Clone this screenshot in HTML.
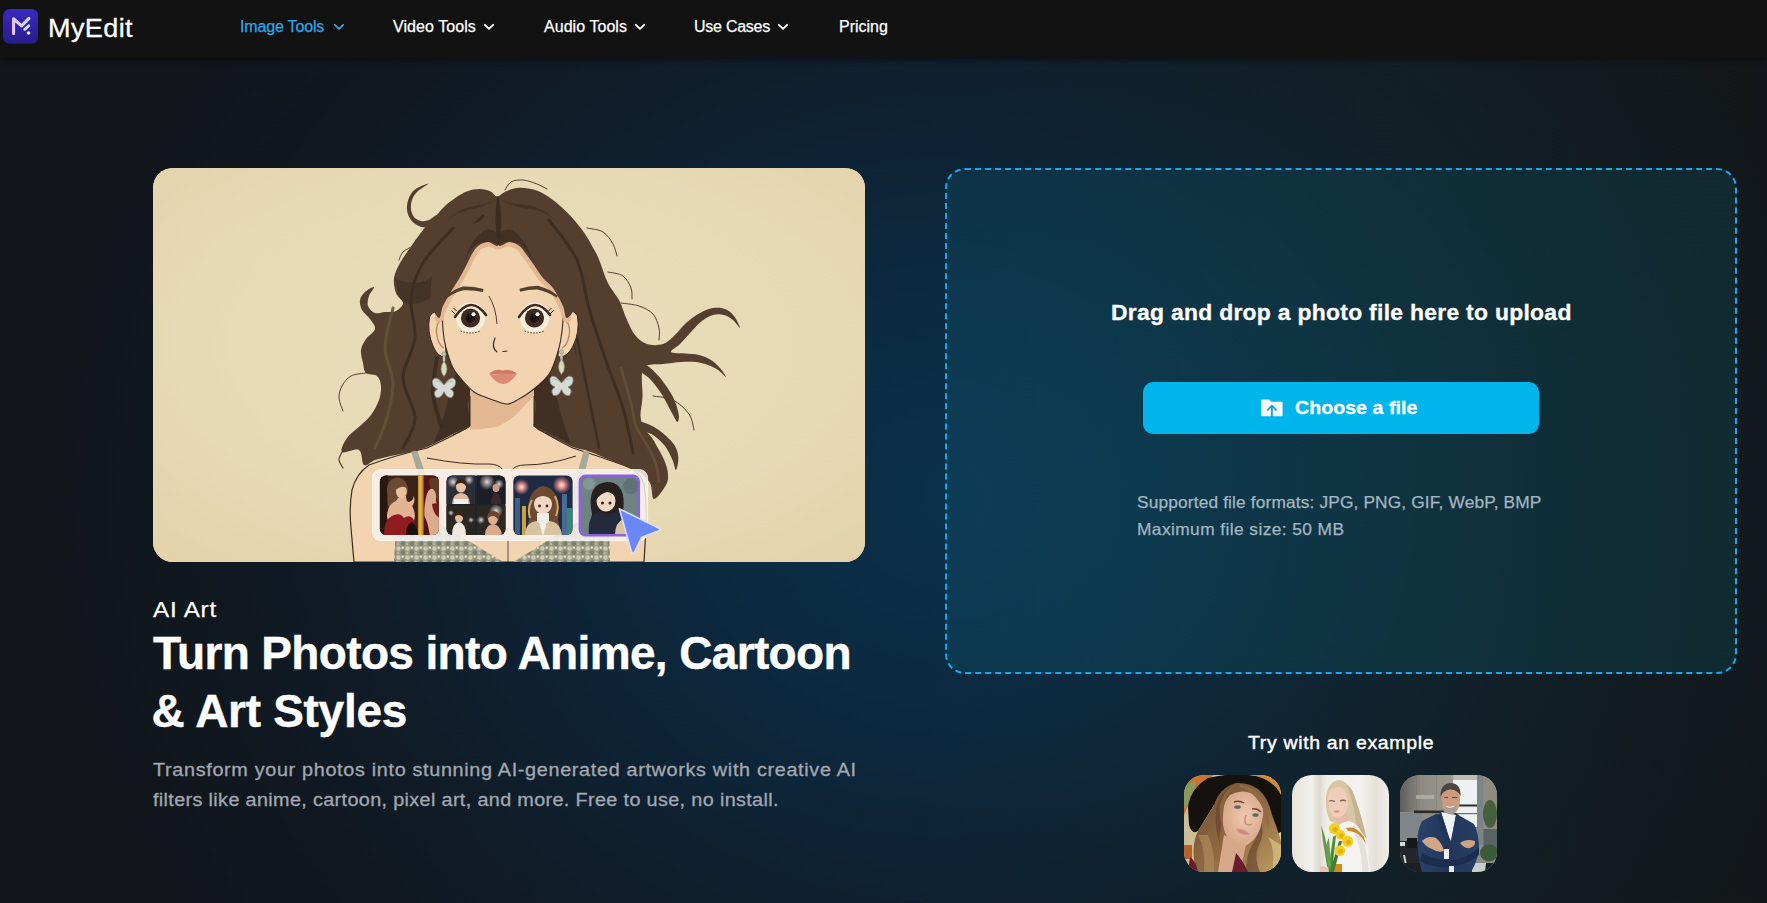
<!DOCTYPE html>
<html lang="en">
<head>
<meta charset="utf-8">
<title>MyEdit - AI Art</title>
<style>
*{box-sizing:border-box;margin:0;padding:0}
html,body{width:1767px;height:903px;overflow:hidden;background:#121212}
body{font-family:"Liberation Sans",sans-serif;color:#fff;position:relative}
.bg{position:absolute;left:0;top:58px;width:1767px;height:845px;
  background:linear-gradient(90deg,rgba(30,70,40,0) 52%,rgba(30,70,40,.10) 80%,rgba(40,60,40,.06) 100%),
  radial-gradient(ellipse 900px 800px at 945px 440px,#0c304a 0%,#0c2b43 22%,#0e2335 45%,#101c28 65%,#10181f 85%,#12151a 100%)}
.hdr{position:absolute;left:0;top:0;width:1767px;height:58px;background:#121212;box-shadow:0 2px 6px rgba(0,0,0,.45)}
.abs{position:absolute;display:block;white-space:nowrap;line-height:1}
.nav{text-decoration:none;display:block;position:absolute;top:18px;font-size:16px;line-height:18px;white-space:nowrap;color:#fff;-webkit-text-stroke:.25px currentColor}

.chev{position:absolute;top:23px;width:12px;height:8px}
.hero{position:absolute;left:153px;top:168px;width:712px;height:394px;border-radius:20px;overflow:hidden;background:#e7d9b6}
.drop{position:absolute;left:945px;top:168px;width:792px;height:506px;border-radius:20px;border:2px dashed #1aa7ee;background:rgba(16,110,130,.2)}
.btn{border:0;padding:0;display:block;position:absolute;left:1143px;top:382px;width:396px;height:52px;border-radius:10px;background:#00b4ec}
.ex{position:absolute;top:775px;width:97px;height:97px;border-radius:20px;overflow:hidden}
</style>
</head>
<body>
<div class="bg"></div>
<header class="hdr"></header>

<!-- logo -->
<svg class="abs" style="left:3.2px;top:9.2px" width="35.2" height="34.8" viewBox="0 0 35 35" preserveAspectRatio="none">
  <defs><linearGradient id="lg" x1="0" y1="0" x2="0" y2="1"><stop offset="0" stop-color="#3a28c2"/><stop offset="1" stop-color="#2a1c8c"/></linearGradient>
  <linearGradient id="lm" x1="0" y1="0" x2="1" y2="0"><stop offset="0" stop-color="#e2c6ff"/><stop offset="1" stop-color="#c9e2ff"/></linearGradient></defs>
  <rect width="35" height="35" rx="7" fill="url(#lg)"/>
  <path d="M10.5 24.6 V9.8 L18.4 17 L25.8 9.5" fill="none" stroke="url(#lm)" stroke-width="3.1" stroke-linecap="round" stroke-linejoin="round"/>
  <path d="M21.6 20.5 L25.7 16.9" fill="none" stroke="#dcdcff" stroke-width="2.8" stroke-linecap="round"/>
  <circle cx="25.4" cy="24.2" r="1.8" fill="#f0ecff"/>
</svg>
<div class="abs" id="brand" style="-webkit-text-stroke:.3px #fff;left:47.5px;top:15px;font-size:26px;letter-spacing:.37px;transform-origin:0 50%;transform:scaleX(1.04)">MyEdit</div>

<!-- nav -->
<a class="nav" id="n1" style="left:240px;color:#2ea7e6;letter-spacing:-.17px">Image Tools</a>
<svg class="chev" style="left:333px" viewBox="0 0 12 8"><path d="M1.9 1.8 L6 5.9 L10.1 1.8" fill="none" stroke="#2ea7e6" stroke-width="1.8" stroke-linecap="round" stroke-linejoin="round"/></svg>
<a class="nav" id="n2" style="left:393px;letter-spacing:.07px">Video Tools</a>
<svg class="chev" style="left:483px" viewBox="0 0 12 8"><path d="M1.9 1.8 L6 5.9 L10.1 1.8" fill="none" stroke="#fff" stroke-width="1.8" stroke-linecap="round" stroke-linejoin="round"/></svg>
<a class="nav" id="n3" style="left:544px;letter-spacing:.05px">Audio Tools</a>
<svg class="chev" style="left:634px" viewBox="0 0 12 8"><path d="M1.9 1.8 L6 5.9 L10.1 1.8" fill="none" stroke="#fff" stroke-width="1.8" stroke-linecap="round" stroke-linejoin="round"/></svg>
<a class="nav" id="n4" style="left:694px;letter-spacing:-.25px">Use Cases</a>
<svg class="chev" style="left:777px" viewBox="0 0 12 8"><path d="M1.9 1.8 L6 5.9 L10.1 1.8" fill="none" stroke="#fff" stroke-width="1.8" stroke-linecap="round" stroke-linejoin="round"/></svg>
<a class="nav" id="n5" style="left:839px">Pricing</a>

<!-- hero illustration -->
<div class="hero">
<svg id="art" width="712" height="394" viewBox="0 0 712 394">
<defs>
<radialGradient id="bgv" cx="50%" cy="45%" r="75%"><stop offset="0" stop-color="#eadcbb"/><stop offset=".6" stop-color="#e8d9b6"/><stop offset="1" stop-color="#e3d2a9"/></radialGradient>
<pattern id="seq" width="9" height="9" patternUnits="userSpaceOnUse"><rect width="9" height="9" fill="#989a85"/><circle cx="2.5" cy="2.5" r="2.2" fill="#cfcab0"/><circle cx="7" cy="6.5" r="2.2" fill="#7c7f6b"/><circle cx="6.8" cy="1.6" r="1.2" fill="#e6e2cc"/><circle cx="2" cy="7" r="1.3" fill="#b9b59a"/></pattern>
<clipPath id="c1"><rect x="226.9" y="307.6" width="59" height="59.4" rx="6"/></clipPath>
<clipPath id="c2"><rect x="293.5" y="307.6" width="59" height="59.4" rx="6"/></clipPath>
<clipPath id="c3"><rect x="360.3" y="307.6" width="59.3" height="59.4" rx="6"/></clipPath>
<clipPath id="c4"><rect x="428" y="309" width="56.7" height="57" rx="5"/></clipPath>
<radialGradient id="spk"><stop offset="0" stop-color="#fff" stop-opacity=".85"/><stop offset=".5" stop-color="#e8dcdc" stop-opacity=".45"/><stop offset="1" stop-color="#e8dcdc" stop-opacity="0"/></radialGradient>
<radialGradient id="fw"><stop offset="0" stop-color="#ffe9d8"/><stop offset=".35" stop-color="#f09a94" stop-opacity=".95"/><stop offset="1" stop-color="#e07a80" stop-opacity="0"/></radialGradient>
</defs>
<rect width="712" height="394" fill="url(#bgv)"/>
<path d="M317 236 L317 258 Q300 268 274 280 Q240 288 216 297 Q203 306 199 322 Q196 340 198 360 L201 394 L491 394 L493 360 Q494 336 491 316 Q486 302 470 297 Q445 288 420 280 Q396 268 381 258 L381 236Z" fill="#f3d4b1" stroke="#3a2a20" stroke-width="1.2"/>
<path d="M258 283 L264.5 283 L284 340 L276 342Z" fill="#a7a998"/>
<path d="M430.5 283 L437 283 L423 342 L415 340Z" fill="#a7a998"/>
<path d="M241 394 L243 360 Q250 345 264 342 L355.5 397 L444 342 Q454 345 456 362 L457 394Z" fill="url(#seq)"/>
<path d="M274 290 Q310 297 336 296 Q346 296 350 302" fill="none" stroke="#3a2a20" stroke-width="1"/>
<path d="M423 288 Q396 297 372 297 Q362 297 358 303" fill="none" stroke="#3a2a20" stroke-width="1"/>
<path d="M355 372 L355 394" stroke="#3a2a20" stroke-width=".8"/>
<path d="M344.3 28.5 C346.8 28.5 348.9 25.0 352.5 23.5 C356.1 22.0 360.8 19.9 366.0 19.7 C371.2 19.5 378.0 20.3 383.7 22.4 C389.4 24.4 394.4 27.7 400.0 32.0 C405.6 36.3 412.4 42.6 417.6 48.0 C422.8 53.4 427.4 59.5 431.0 64.5 C434.6 69.5 436.7 73.9 439.0 78.0 C441.3 82.1 442.5 83.2 445.0 89.0 C447.5 94.8 451.2 106.8 454.0 113.0 C456.8 119.2 459.8 122.5 462.0 126.0 C464.2 129.5 465.0 129.7 467.0 134.0 C469.0 138.3 471.5 146.5 474.0 152.0 C476.5 157.5 478.7 163.0 482.0 167.0 C485.3 171.0 489.3 174.5 494.0 176.0 C498.7 177.5 505.3 177.5 510.0 176.0 C514.7 174.5 518.2 170.5 522.0 167.0 C525.8 163.5 528.8 158.7 533.0 155.0 C537.2 151.3 542.5 147.5 547.0 145.0 C551.5 142.5 555.8 140.7 560.0 140.0 C564.2 139.3 568.5 139.7 572.0 141.0 C575.5 142.3 578.5 144.8 581.0 148.0 C583.5 151.2 587.2 159.3 587.0 160.0 C586.8 160.7 582.7 154.2 580.0 152.0 C577.3 149.8 574.3 147.8 571.0 147.0 C567.7 146.2 563.7 146.0 560.0 147.0 C556.3 148.0 552.7 150.2 549.0 153.0 C545.3 155.8 541.7 160.2 538.0 164.0 C534.3 167.8 530.3 172.7 527.0 176.0 C523.7 179.3 517.2 182.4 518.0 184.0 C518.8 185.6 527.3 185.0 532.0 185.5 C536.7 186.0 541.7 185.9 546.0 187.0 C550.3 188.1 554.5 189.8 558.0 192.0 C561.5 194.2 564.5 197.2 567.0 200.0 C569.5 202.8 573.3 208.7 573.0 209.0 C572.7 209.3 568.0 204.0 565.0 202.0 C562.0 200.0 558.7 198.3 555.0 197.0 C551.3 195.7 547.5 194.5 543.0 194.0 C538.5 193.5 533.5 193.7 528.0 194.0 C522.5 194.3 515.7 195.4 510.0 196.0 C504.3 196.6 497.5 195.8 494.0 197.5 C490.5 199.2 489.8 200.8 489.0 206.0 C488.2 211.2 489.8 222.0 489.5 229.0 C489.2 236.0 487.2 242.8 487.5 248.0 C487.8 253.2 489.1 256.3 491.0 260.0 C492.9 263.7 496.5 266.3 499.0 270.0 C501.5 273.7 503.8 278.0 506.0 282.0 C508.2 286.0 510.5 290.0 512.0 294.0 C513.5 298.0 514.8 302.2 515.0 306.0 C515.2 309.8 515.3 312.8 513.0 317.0 C510.7 321.2 503.7 331.3 501.0 331.0 C498.3 330.7 499.8 319.7 497.0 315.0 C494.2 310.3 490.7 306.8 484.0 303.0 C477.3 299.2 465.2 295.3 457.0 292.0 C448.8 288.7 441.2 285.2 435.0 283.0 C428.8 280.8 426.5 281.7 420.0 279.0 C413.5 276.3 402.5 270.7 396.0 267.0 C389.5 263.3 383.5 263.2 381.0 257.0 C378.5 250.8 386.2 239.5 381.0 230.0 C375.8 220.5 360.7 200.0 350.0 200.0 C339.3 200.0 322.5 220.5 317.0 230.0 C311.5 239.5 319.8 251.0 317.0 257.0 C314.2 263.0 307.2 262.3 300.0 266.0 C292.8 269.7 281.2 276.0 274.0 279.0 C266.8 282.0 263.0 282.5 257.0 284.0 C251.0 285.5 243.8 286.7 238.0 288.0 C232.2 289.3 226.5 290.5 222.0 292.0 C217.5 293.5 213.7 298.7 211.0 297.0 C208.3 295.3 209.7 284.2 206.0 282.0 C202.3 279.8 191.0 286.0 189.0 284.0 C187.0 282.0 191.0 274.3 194.0 270.0 C197.0 265.7 203.0 261.8 207.0 258.0 C211.0 254.2 214.8 251.3 218.0 247.0 C221.2 242.7 224.3 236.8 226.0 232.0 C227.7 227.2 228.3 222.0 228.0 218.0 C227.7 214.0 226.5 210.2 224.0 208.0 C221.5 205.8 215.3 207.2 213.0 205.0 C210.7 202.8 210.8 198.8 210.0 195.0 C209.2 191.2 207.5 186.0 208.0 182.0 C208.5 178.0 210.7 174.5 213.0 171.0 C215.3 167.5 221.3 164.3 222.0 161.0 C222.7 157.7 219.2 154.2 217.0 151.0 C214.8 147.8 210.7 145.2 209.0 142.0 C207.3 138.8 206.5 135.0 207.0 132.0 C207.5 129.0 209.7 126.2 212.0 124.0 C214.3 121.8 220.3 118.3 221.0 119.0 C221.7 119.7 217.0 124.8 216.0 128.0 C215.0 131.2 214.0 135.2 215.0 138.0 C216.0 140.8 219.2 144.0 222.0 145.0 C224.8 146.0 228.5 144.3 232.0 144.0 C235.5 143.7 240.0 144.5 243.0 143.0 C246.0 141.5 250.0 138.0 250.0 135.0 C250.0 132.0 244.5 129.2 243.0 125.0 C241.5 120.8 240.3 115.0 241.0 110.0 C241.7 105.0 244.3 100.0 247.0 95.0 C249.7 90.0 253.2 85.5 257.0 80.0 C260.8 74.5 265.9 67.1 270.0 62.0 C274.1 56.9 278.6 53.0 281.8 49.5 C285.0 46.0 286.3 43.8 289.0 41.0 C291.7 38.2 294.0 35.9 298.0 33.0 C302.0 30.1 308.2 25.7 313.0 23.7 C317.8 21.7 322.5 21.0 326.6 21.0 C330.7 21.0 334.6 22.2 337.5 23.5 C340.4 24.8 341.8 28.5 344.3 28.5Z" fill="#543f2e"/>
<path d="M488.0 198.0 C489.2 197.1 492.2 196.3 495.5 198.5 C498.8 200.7 503.9 205.9 508.0 211.0 C512.1 216.1 517.1 223.2 520.0 229.0 C522.9 234.8 524.9 241.8 525.6 246.0 C526.4 250.2 525.5 254.0 524.5 254.0 C523.5 254.0 522.1 250.7 519.5 246.0 C516.9 241.3 512.4 231.8 508.6 226.0 C504.9 220.2 500.4 214.7 497.0 211.0 C493.6 207.3 490.0 206.2 488.5 204.0 C487.0 201.8 486.8 198.9 488.0 198.0Z" fill="#543f2e"/>
<path d="M486.0 254.0 C487.7 253.2 494.2 255.8 498.0 257.5 C501.8 259.2 505.1 261.2 509.0 264.5 C512.9 267.8 518.7 272.8 521.4 277.0 C524.1 281.2 525.0 285.3 525.3 289.5 C525.6 293.7 524.0 301.6 523.0 302.0 C522.0 302.4 521.3 296.0 519.5 292.0 C517.7 288.0 515.2 282.2 512.0 278.0 C508.8 273.8 504.0 269.7 500.0 267.0 C496.0 264.3 490.3 264.2 488.0 262.0 C485.7 259.8 484.3 254.8 486.0 254.0Z" fill="#543f2e"/>
<path d="M242.5 111 Q256 117 272 113 Q280 110 284 100 Q284 118 280 128 Q268 137 256 136 Q248 134 246 128Z" fill="#3c2c20" opacity=".6"/>
<path d="M402 92 Q410 112 414 136 Q420 160 424 190 Q414 160 410 144 Q404 120 396 104Z" fill="#3c2c20" opacity=".6"/>
<path d="M284.0 47.0 C282.5 46.5 278.7 51.0 276.0 52.0 C273.3 53.0 270.5 53.5 268.0 53.0 C265.5 52.5 262.7 51.0 261.0 49.0 C259.3 47.0 258.3 43.8 258.0 41.0 C257.7 38.2 258.0 34.8 259.0 32.0 C260.0 29.2 261.2 26.7 264.0 24.0 C266.8 21.3 276.0 16.0 275.7 15.6 C275.4 15.2 265.4 18.9 262.0 21.5 C258.6 24.1 256.8 27.6 255.5 31.0 C254.2 34.4 253.6 38.5 254.0 42.0 C254.4 45.5 256.0 49.3 258.0 52.0 C260.0 54.7 263.0 56.8 266.0 58.0 C269.0 59.2 272.8 60.0 276.0 59.5 C279.2 59.0 283.7 57.1 285.0 55.0 C286.3 52.9 285.5 47.5 284.0 47.0Z" fill="#543f2e"/>
<path d="M352.0 22.0 C353.0 20.7 355.0 15.7 358.0 14.0 C361.0 12.3 365.7 11.7 370.0 12.0 C374.3 12.3 380.0 14.5 384.0 16.0 C388.0 17.5 392.3 20.2 394.0 21.0" fill="none" stroke="#543f2e" stroke-width="1" stroke-linecap="round"/>
<path d="M434.0 60.0 C436.7 60.7 445.7 61.3 450.0 64.0 C454.3 66.7 457.7 72.0 460.0 76.0 C462.3 80.0 463.3 86.0 464.0 88.0" fill="none" stroke="#543f2e" stroke-width="1" stroke-linecap="round"/>
<path d="M455.0 104.0 C457.5 104.7 466.2 105.3 470.0 108.0 C473.8 110.7 476.5 116.2 478.0 120.0 C479.5 123.8 478.8 129.2 479.0 131.0" fill="none" stroke="#543f2e" stroke-width="1" stroke-linecap="round"/>
<path d="M468.0 135.0 C471.0 135.5 480.7 136.2 486.0 138.0 C491.3 139.8 496.7 142.3 500.0 146.0 C503.3 149.7 505.0 155.7 506.0 160.0 C507.0 164.3 506.0 170.0 506.0 172.0" fill="none" stroke="#543f2e" stroke-width="1" stroke-linecap="round"/>
<path d="M213.0 205.0 C210.5 205.5 202.0 205.8 198.0 208.0 C194.0 210.2 191.0 214.3 189.0 218.0 C187.0 221.7 185.8 225.8 186.0 230.0 C186.2 234.2 189.3 240.8 190.0 243.0" fill="none" stroke="#543f2e" stroke-width="1" stroke-linecap="round"/>
<path d="M260.0 78.0 C258.3 79.0 252.3 81.7 250.0 84.0 C247.7 86.3 246.7 90.7 246.0 92.0" fill="none" stroke="#543f2e" stroke-width="1" stroke-linecap="round"/>
<path d="M500.0 228.0 C503.3 228.7 514.0 229.0 520.0 232.0 C526.0 235.0 532.5 241.0 536.0 246.0 C539.5 251.0 540.2 259.3 541.0 262.0" fill="none" stroke="#543f2e" stroke-width="1" stroke-linecap="round"/>
<path d="M189.0 284.0 C188.5 285.3 185.8 289.3 186.0 292.0 C186.2 294.7 189.3 298.7 190.0 300.0" fill="none" stroke="#543f2e" stroke-width="1.2" stroke-linecap="round"/>
<path d="M300.0 60.0 C295.0 65.8 277.0 83.3 270.0 95.0 C263.0 106.7 259.3 117.5 258.0 130.0 C256.7 142.5 263.3 156.7 262.0 170.0 C260.7 183.3 250.0 196.7 250.0 210.0 C250.0 223.3 262.0 238.3 262.0 250.0 C262.0 261.7 252.0 275.0 250.0 280.0" fill="none" stroke="#3c2c20" stroke-width="3" stroke-linecap="round" opacity=".9"/>
<path d="M330.0 48.0 C324.3 54.0 303.5 72.3 296.0 84.0 C288.5 95.7 286.8 112.3 285.0 118.0" fill="none" stroke="#3c2c20" stroke-width="3" stroke-linecap="round" opacity=".9"/>
<path d="M396.0 52.0 C400.7 58.7 417.3 77.3 424.0 92.0 C430.7 106.7 431.3 123.7 436.0 140.0 C440.7 156.3 446.3 173.3 452.0 190.0 C457.7 206.7 465.3 224.2 470.0 240.0 C474.7 255.8 478.3 277.5 480.0 285.0" fill="none" stroke="#3c2c20" stroke-width="3" stroke-linecap="round" opacity=".9"/>
<path d="M420.0 150.0 C421.7 158.3 426.7 183.3 430.0 200.0 C433.3 216.7 437.3 236.7 440.0 250.0 C442.7 263.3 445.0 275.0 446.0 280.0" fill="none" stroke="#3c2c20" stroke-width="2.5" stroke-linecap="round" opacity=".9"/>
<path d="M240.0 140.0 C238.7 146.7 232.0 167.5 232.0 180.0 C232.0 192.5 239.7 203.3 240.0 215.0 C240.3 226.7 237.0 239.2 234.0 250.0 C231.0 260.8 224.0 275.0 222.0 280.0" fill="none" stroke="#67503b" stroke-width="3" stroke-linecap="round" opacity=".9"/>
<path d="M468.0 200.0 C469.7 205.8 475.5 225.3 478.0 235.0 C480.5 244.7 480.3 251.0 483.0 258.0 C485.7 265.0 490.7 270.7 494.0 277.0 C497.3 283.3 501.0 289.8 503.0 296.0 C505.0 302.2 505.5 311.0 506.0 314.0" fill="none" stroke="#67503b" stroke-width="2.5" stroke-linecap="round" opacity=".9"/>
<path d="M284.0 190.0 C283.3 195.8 279.3 213.7 280.0 225.0 C280.7 236.3 286.7 252.5 288.0 258.0" fill="none" stroke="#3c2c20" stroke-width="4" stroke-linecap="round" opacity=".9"/>
<path d="M317 205 L317 257 Q300 266 280 276 Q292 250 296 226 Q300 210 306 200Z" fill="#3c2c20" opacity=".8"/>
<path d="M381 205 L381 257 Q398 266 418 276 Q408 250 403 226 Q399 210 394 200Z" fill="#3c2c20" opacity=".8"/>
<path d="M317 214 L317 258 Q335 266 349 262 Q366 262 381 256 L381 214Z" fill="#f3d4b1"/>
<path d="M317 214 L317 261.5 Q333 261 345 258.4 Q357 253 364.5 245.2 Q373 236 381 228 L381 214Z" fill="#e2b791"/>
<path d="M317 228 L317 258 Q308 264 300 267" fill="none" stroke="#3a2a20" stroke-width="1"/>
<path d="M381 228 L381 257 Q388 263 396 267" fill="none" stroke="#3a2a20" stroke-width="1"/>
<path d="M292 147 Q281 139 276.5 149 Q274 164 280 178 Q285 190 293 189Z" fill="#f3d4b1" stroke="#3a2a20" stroke-width="1"/>
<path d="M407 146 Q419 138 424.5 148 Q427 164 420 178 Q414 190 405 189Z" fill="#f3d4b1" stroke="#3a2a20" stroke-width="1"/>
<path d="M287 152 Q281 160 285 172 Q287 178 291 180" fill="none" stroke="#b98462" stroke-width="1.3"/>
<path d="M413 152 Q419 160 415 172 Q413 178 409 180" fill="none" stroke="#b98462" stroke-width="1.3"/>
<path d="M345.0 74.0 C348.8 74.0 352.3 75.7 356.0 77.0 C359.7 78.3 362.7 78.5 367.0 82.0 C371.3 85.5 377.7 93.3 382.0 98.0 C386.3 102.7 390.0 106.2 393.0 110.0 C396.0 113.8 397.7 117.0 400.0 121.0 C402.3 125.0 405.3 129.8 407.0 134.0 C408.7 138.2 409.7 141.2 410.0 146.0 C410.3 150.8 409.7 157.3 409.0 163.0 C408.3 168.7 407.8 173.3 406.0 180.0 C404.2 186.7 400.8 197.3 398.0 203.0 C395.2 208.7 392.5 210.5 389.0 214.0 C385.5 217.5 380.8 221.2 377.0 224.0 C373.2 226.8 369.7 229.0 366.0 231.0 C362.3 233.0 358.8 235.7 355.0 236.0 C351.2 236.3 346.8 234.2 343.0 233.0 C339.2 231.8 335.7 230.5 332.0 229.0 C328.3 227.5 324.8 226.8 321.0 224.0 C317.2 221.2 312.5 216.0 309.0 212.0 C305.5 208.0 302.7 205.3 300.0 200.0 C297.3 194.7 294.7 186.3 293.0 180.0 C291.3 173.7 290.5 168.0 290.0 162.0 C289.5 156.0 289.5 148.8 290.0 144.0 C290.5 139.2 291.7 136.5 293.0 133.0 C294.3 129.5 296.2 126.5 298.0 123.0 C299.8 119.5 301.8 115.5 304.0 112.0 C306.2 108.5 309.0 105.3 311.0 102.0 C313.0 98.7 314.3 94.8 316.0 92.0 C317.7 89.2 318.2 87.5 321.0 85.0 C323.8 82.5 329.0 78.8 333.0 77.0 C337.0 75.2 341.2 74.0 345.0 74.0Z" fill="#f3d4b1" stroke="#3a2a20" stroke-width="1.1"/>
<path d="M345.5 77.0 C343.8 76.5 338.4 73.8 335.0 74.0 C331.6 74.2 327.7 76.0 325.0 78.0 C322.3 80.0 320.9 82.8 319.0 86.0 C317.1 89.2 315.6 93.0 313.5 97.0 C311.4 101.0 308.9 105.8 306.5 110.0 C304.1 114.2 301.8 117.3 299.0 122.0 C296.2 126.7 292.2 133.3 290.0 138.0 C287.8 142.7 286.7 148.0 286.0 150.0" fill="none" stroke="#e2b791" stroke-width="9" stroke-linecap="round"/>
<path d="M345.5 77.0 C347.3 76.5 353.0 73.8 356.5 74.0 C360.0 74.2 363.8 76.0 366.5 78.0 C369.2 80.0 370.6 82.8 373.0 86.0 C375.4 89.2 378.2 93.0 381.0 97.0 C383.8 101.0 386.8 106.2 390.0 110.0 C393.2 113.8 396.7 115.3 400.0 120.0 C403.3 124.7 407.7 133.0 410.0 138.0 C412.3 143.0 413.3 148.0 414.0 150.0" fill="none" stroke="#e2b791" stroke-width="9" stroke-linecap="round"/>
<path d="M345.5 77.0 C343.8 80.3 338.4 73.8 335.0 74.0 C331.6 74.2 327.7 76.0 325.0 78.0 C322.3 80.0 320.9 82.8 319.0 86.0 C317.1 89.2 315.6 93.0 313.5 97.0 C311.4 101.0 308.9 105.8 306.5 110.0 C304.1 114.2 301.8 117.3 299.0 122.0 C296.2 126.7 292.2 133.3 290.0 138.0 C287.8 142.7 288.0 150.7 286.0 150.0 C284.0 149.3 279.0 141.7 278.0 134.0 C277.0 126.3 277.7 113.7 280.0 104.0 C282.3 94.3 286.7 83.7 292.0 76.0 C297.3 68.3 303.2 61.7 312.0 58.0 C320.8 54.3 339.4 50.8 345.0 54.0 C350.6 57.2 347.2 73.7 345.5 77.0Z" fill="#543f2e"/>
<path d="M345.5 77.0 C347.2 80.3 353.0 73.8 356.5 74.0 C360.0 74.2 363.8 76.0 366.5 78.0 C369.2 80.0 370.6 82.8 373.0 86.0 C375.4 89.2 378.2 93.0 381.0 97.0 C383.8 101.0 386.8 106.2 390.0 110.0 C393.2 113.8 396.7 115.3 400.0 120.0 C403.3 124.7 407.7 133.0 410.0 138.0 C412.3 143.0 411.7 150.7 414.0 150.0 C416.3 149.3 423.0 141.7 424.0 134.0 C425.0 126.3 423.0 113.7 420.0 104.0 C417.0 94.3 412.3 83.7 406.0 76.0 C399.7 68.3 392.0 61.7 382.0 58.0 C372.0 54.3 352.1 50.8 346.0 54.0 C339.9 57.2 343.8 73.7 345.5 77.0Z" fill="#543f2e"/>
<path d="M344.3 28.5 Q340 52 345.5 77.5 Q351 52 345.5 28.5Z" fill="#3c2c20"/>
<path d="M345.5 77 Q336 71 324 76 Q316 82 311 94 Q318 70 332 62 Q341 60 345.5 68Z" fill="#3c2c20" opacity=".75"/>
<path d="M345.5 77 Q355 71 367 76 Q375 82 380 94 Q373 70 359 62 Q350 60 345.5 68Z" fill="#3c2c20" opacity=".75"/>
<path d="M344 31 Q330 40 314 42 Q300 46 292 54 Q306 40 322 38 Q336 36 344 31Z" fill="#3c2c20" opacity=".6"/>
<path d="M346 31 Q360 40 378 41 Q394 44 404 54 Q392 40 374 37 Q358 36 346 31Z" fill="#3c2c20" opacity=".6"/>
<path d="M292.5 128.5 Q300 121.5 310 118.6 Q320 118.2 330.5 121 L330 124 Q320 121.8 310.5 122.3 Q301 124.6 294 130Z" fill="#543f2e"/>
<path d="M366.5 120.8 Q376 118 385 117.8 Q396 120.5 405 127.8 L403.5 129.6 Q395 124 384.5 121.5 Q376 121.4 367 123.8Z" fill="#543f2e"/>
<ellipse cx="317.5" cy="149.5" rx="14.6" ry="15" fill="#f7efdd"/>
<path d="M302.0 149 Q317.5 126 333.0 147" fill="none" stroke="#3a2a20" stroke-width="2.6" stroke-linecap="round"/>
<path d="M302.0 146 l-3.5 -3.5 M303.5 143 l-3.0 -3" stroke="#3a2a20" stroke-width="1" fill="none"/>
<circle cx="317.5" cy="150" r="9.6" fill="#3d2b20"/>
<circle cx="317.5" cy="150" r="5" fill="#1f1611"/>
<circle cx="320.5" cy="146.3" r="2" fill="#fff"/>
<path d="M307.5 163 Q317.5 167 327.5 163" fill="none" stroke="#3a2a20" stroke-width=".9" stroke-dasharray="1.5 1.5"/>
<ellipse cx="381.5" cy="149.5" rx="14.6" ry="15" fill="#f7efdd"/>
<path d="M366.0 149 Q381.5 126 397.0 147" fill="none" stroke="#3a2a20" stroke-width="2.6" stroke-linecap="round"/>
<path d="M397.0 146 l3.5 -3.5 M395.5 143 l3.0 -3" stroke="#3a2a20" stroke-width="1" fill="none"/>
<circle cx="381.5" cy="150" r="9.6" fill="#3d2b20"/>
<circle cx="381.5" cy="150" r="5" fill="#1f1611"/>
<circle cx="384.5" cy="146.3" r="2" fill="#fff"/>
<path d="M371.5 163 Q381.5 167 391.5 163" fill="none" stroke="#3a2a20" stroke-width=".9" stroke-dasharray="1.5 1.5"/>
<path d="M336 128 Q343 140 344 156" fill="none" stroke="#3a2a20" stroke-width=".9"/>
<path d="M342 170 Q338 180 344 184 M350 183.5 L354 183" fill="none" stroke="#3a2a20" stroke-width="1.2" stroke-linecap="round"/>
<path d="M336 205.5 Q343 200 350 202.5 Q357 200 364 205.5 Q357 207 350 206 Q343 207 336 205.5Z" fill="#cf7a66"/>
<path d="M336 205.5 Q343 207 350 206 Q357 207 364 205.5 Q357 216 350 216 Q343 216 336 205.5Z" fill="#dd8a74"/>
<path d="M291.0 184.0 l0 9" stroke="#c4c6b8" stroke-width="2.4" stroke-linecap="round"/>
<circle cx="291.0" cy="186.0" r="2" fill="none" stroke="#9c9f90" stroke-width="1"/>
<path d="M291.0 193.0 q-6 8 0 15.5 q6 -7.5 0 -15.5Z" fill="#dad9b8" stroke="#8d907f" stroke-width=".7"/>
<path d="M291.0 217.0 q-8 -11 -11.5 -4.5 q-1 6.5 5 8.5 q-5.5 3 -1.5 8.5 q5.5 1 8 -6 q2.5 7 8 6 q4 -5.5 -1.5 -8.5 q6 -2 5 -8.5 q-3.5 -6.5 -11.5 4.5Z" fill="#d5dbd4" stroke="#7e857e" stroke-width=".8"/>
<path d="M290.0 216.0 q-5 -4 -8 -3 M292.0 216.0 q5 -4 8 -3" fill="none" stroke="#9aa29b" stroke-width=".6"/>
<path d="M408.5 182.0 l0 9" stroke="#c4c6b8" stroke-width="2.4" stroke-linecap="round"/>
<circle cx="408.5" cy="184.0" r="2" fill="none" stroke="#9c9f90" stroke-width="1"/>
<path d="M408.5 191.0 q-6 8 0 15.5 q6 -7.5 0 -15.5Z" fill="#dad9b8" stroke="#8d907f" stroke-width=".7"/>
<path d="M408.5 215.0 q-8 -11 -11.5 -4.5 q-1 6.5 5 8.5 q-5.5 3 -1.5 8.5 q5.5 1 8 -6 q2.5 7 8 6 q4 -5.5 -1.5 -8.5 q6 -2 5 -8.5 q-3.5 -6.5 -11.5 4.5Z" fill="#d5dbd4" stroke="#7e857e" stroke-width=".8"/>
<path d="M407.5 214.0 q-5 -4 -8 -3 M409.5 214.0 q5 -4 8 -3" fill="none" stroke="#9aa29b" stroke-width=".6"/>
<rect x="219.6" y="301.6" width="275" height="71" rx="8" fill="#f7f1ee" fill-opacity=".86" stroke="#ffffff" stroke-opacity=".7" stroke-width="1"/>
<g clip-path="url(#c1)"><g transform="translate(226.9 307.9)">
<rect x="-1" y="-1" width="61" height="61" fill="#3a2216"/>
<rect x="-1" y="-1" width="9" height="61" fill="#28160f"/>
<rect x="43.6" y="-1" width="17" height="61" fill="#571313"/>
<rect x="38" y="-1" width="5.6" height="61" fill="#c8922f"/><rect x="39.5" y="-1" width="2" height="61" fill="#e6b85a"/>
<ellipse cx="17.5" cy="14" rx="10.5" ry="12.5" fill="#6b4a32"/>
<path d="M8 16 q-2 12 2 20 l8 -6 z" fill="#6b4a32"/>
<path d="M7 40 Q8 28 16 25 L20 20 L26 20 L27 25 Q34 28 35 40 L34 46 L8 46Z" fill="#e2b494"/>
<ellipse cx="21.5" cy="15.5" rx="5.4" ry="6.8" fill="#ebc0a0"/>
<path d="M15.5 14 q1 -8 8 -7 q4 1 4 6 q-3 -3 -6 -2 q-4 1 -6 3Z" fill="#6b4a32"/>
<path d="M27 26 q6 0 7 -6 q2 6 -3 12Z" fill="#e2b494"/>
<path d="M4 60 Q4 44 12 40 Q20 36 24 42 Q30 38 34 44 Q36 52 35 60Z" fill="#8f1c1e"/>
<path d="M26 60 Q26 48 32 46 Q38 50 38 60Z" fill="#1c0f0d"/>
<path d="M50 2 Q58 0 60 6 L60 30 Q56 20 52 16 Q48 10 50 2Z" fill="#5f3a26"/>
<path d="M46 22 Q48 12 53 13 Q57 16 56 24 L58 34 L60 40 L60 60 L50 60 Q48 46 44.5 40 Q44 30 46 22Z" fill="#dcaa8c"/>
<path d="M52 28 Q58 26 60 30 L60 42 Q54 40 52 28Z" fill="#7d191b"/>
</g></g>
<g clip-path="url(#c2)">
<rect x="293" y="307" width="60" height="61" fill="#20232c"/>
<rect x="293" y="307" width="29" height="29" fill="#2b2f3a"/><rect x="324" y="307" width="29" height="29" fill="#1b1e27"/>
<rect x="293" y="338" width="29" height="30" fill="#2a2622"/><rect x="324" y="338" width="29" height="30" fill="#2d2722"/>
<circle cx="300" cy="314" r="6" fill="url(#spk)"/><circle cx="316" cy="312" r="5" fill="url(#spk)"/><circle cx="334" cy="314" r="8" fill="url(#spk)"/><circle cx="346" cy="316" r="5" fill="url(#spk)"/><circle cx="343" cy="343" r="7" fill="url(#spk)"/><circle cx="328" cy="352" r="4" fill="url(#spk)"/><circle cx="298" cy="345" r="3" fill="url(#spk)"/><circle cx="318" cy="352" r="3" fill="url(#spk)"/>
<ellipse cx="308" cy="319" rx="5" ry="5.5" fill="#e8c3a8"/><path d="M299 336 q1 -11 9 -11 q8 0 9 11Z" fill="#e2b79b"/><rect x="301" y="331" width="14" height="5" fill="#f1efec"/>
<path d="M302 318 q1 -8 7 -7 q6 1 5 8 q-3 -4 -6 -4 q-4 0 -6 3Z" fill="#3a2418"/>
<ellipse cx="343" cy="320" rx="3.5" ry="4" fill="#c99d85"/><path d="M338 336 q0 -10 5 -11 q5 1 5 11Z" fill="#3a2a2a"/>
<ellipse cx="306" cy="350" rx="4" ry="4.5" fill="#e3bb9f"/><path d="M299 368 q0 -13 7 -14 q7 1 7 14Z" fill="#efe9e2"/>
<path d="M301 349 q1 -7 6 -6 q5 1 4 7 q-3 -3 -5 -3 q-3 0 -5 2Z" fill="#3b2518"/>
<ellipse cx="340" cy="351" rx="5" ry="5.5" fill="#ddb093"/><path d="M332 368 q0 -11 8 -12 q8 1 9 12Z" fill="#d8a98d"/>
<path d="M334 352 q0 -10 7 -9 q7 1 5 10 q-3 -5 -6 -5 q-4 0 -6 4Z" fill="#6a4630"/>
</g>
<g clip-path="url(#c3)">
<rect x="360" y="307" width="60" height="61" fill="#1f2a44"/>
<rect x="362" y="330" width="5" height="38" fill="#3b5f87"/><rect x="369" y="338" width="4" height="30" fill="#c7a048"/><rect x="409" y="326" width="5" height="42" fill="#4a6c93"/><rect x="414" y="340" width="5" height="28" fill="#2f8a78"/>
<circle cx="368.5" cy="319" r="8" fill="url(#fw)"/>
<circle cx="408.5" cy="317" r="9" fill="url(#fw)"/>
<path d="M376 352 q-4 -30 14 -34 q18 2 15 34 q3 10 -2 16 l-26 0 q-4 -8 -1 -16Z" fill="#6e4a30"/>
<path d="M377 350 q-3 -10 2 -18 M403 348 q4 -10 -1 -20" stroke="#d9a860" stroke-width="2" fill="none"/>
<ellipse cx="390" cy="336" rx="9" ry="10" fill="#f4d7c2"/>
<path d="M380 334 q2 -13 11 -12 q9 1 9 12 q-4 -6 -10 -6 q-6 0 -10 6Z" fill="#6e4a30"/>
<circle cx="386.5" cy="338" r="1.4" fill="#3a2a20"/><circle cx="394" cy="338" r="1.4" fill="#3a2a20"/>
<rect x="384" y="345" width="12" height="10" fill="#f1ede7"/>
<path d="M372 368 q0 -14 12 -15 l6 8 l6 -8 q12 1 13 15Z" fill="#d8c3a0"/>
<path d="M386 355 l4 13 l4 -13Z" fill="#f3efe9"/>
</g>
<rect x="425.6" y="306.6" width="61.5" height="61.9" rx="7" fill="#8b62dc"/>
<g clip-path="url(#c4)">
<rect x="427" y="308" width="60" height="59" fill="#6f8284"/>
<circle cx="436" cy="316" r="6" fill="#8fa09b" opacity=".7"/><circle cx="478" cy="318" r="8" fill="#596c70" opacity=".7"/>
<path d="M439 346 q-6 -30 15 -32 q20 0 16 30 q2 12 -2 22 l-26 0 q-6 -8 -3 -20Z" fill="#26201f"/>
<ellipse cx="453" cy="333" rx="9.5" ry="10.5" fill="#f2d9c3"/>
<path d="M443 332 q0 -15 12 -14 q10 1 9 14 q-4 -8 -10 -8 q-6 1 -11 8Z" fill="#26201f"/>
<circle cx="449.5" cy="335" r="1.5" fill="#2a1d18"/><circle cx="457" cy="335" r="1.5" fill="#2a1d18"/>
<path d="M436 367 q-2 -20 10 -23 q10 4 22 -1 q8 6 6 24Z" fill="#232a3b"/>
<path d="M462 367 q0 -12 8 -16 q12 2 16 16Z" fill="#d9c4a2"/>
</g>
<path d="M466.3 340.8 L505.5 360 Q508.3 361.6 505.2 363 L488.6 369.3 L481.4 384 Q479.8 386.6 478.5 383.8Z" fill="#6a86f7" stroke="#dfe3ff" stroke-opacity=".9" stroke-width="1.6" stroke-linejoin="round"/>
</svg>
</div>

<!-- left copy -->
<div class="abs" id="t1" style="-webkit-text-stroke:.25px currentColor;left:153px;top:599px;font-size:22px;letter-spacing:.73px;transform-origin:0 50%;transform:scaleX(1.1)">AI Art</div>
<h1 style="font:inherit"><span class="abs" id="t2" style="-webkit-text-stroke:.4px currentColor;left:153px;top:630px;font-size:46px;font-weight:700;letter-spacing:-.65px">Turn Photos into Anime, Cartoon</span> <span class="abs" id="t3" style="-webkit-text-stroke:.4px currentColor;left:151.5px;top:688px;font-size:46px;font-weight:700;letter-spacing:-.3px">&amp; Art Styles</span></h1>
<p><span class="abs" id="t4" style="-webkit-text-stroke:.3px currentColor;left:153px;top:761px;font-size:18px;letter-spacing:.61px;color:#a2a7b0;transform-origin:0 50%;transform:scaleX(1.1)">Transform your photos into stunning AI-generated artworks with creative AI</span> <span class="abs" id="t5" style="-webkit-text-stroke:.3px currentColor;left:153px;top:791px;font-size:18px;letter-spacing:.32px;color:#a2a7b0;transform-origin:0 50%;transform:scaleX(1.1)">filters like anime, cartoon, pixel art, and more. Free to use, no install.</span></p>

<!-- drop zone -->
<div class="drop"></div>
<div class="abs" id="d1" style="-webkit-text-stroke:.3px currentColor;left:1110.5px;top:302px;font-size:22px;font-weight:700;letter-spacing:.28px;transform-origin:0 50%;transform:scaleX(1.04)">Drag and drop a photo file here to upload</div>
<button class="btn" type="button" aria-label="Choose a file"></button>
<svg class="abs" style="left:1261px;top:398px" width="22" height="19" viewBox="0 0 22 19">
  <path d="M0.1 2.5 Q0.1 1.5 1.1 1.5 H8.2 L10.6 3.8 H20.6 Q21.6 3.8 21.6 4.8 V17.3 Q21.6 18.3 20.6 18.3 H1.1 Q0.1 18.3 0.1 17.3 Z" fill="#f6fbff"/>
  <path d="M10.9 18.4 V8.2 M6.7 11.8 L10.9 7.7 L15.1 11.8" fill="none" stroke="#0aa6dc" stroke-width="1.8" stroke-linecap="round" stroke-linejoin="round"/>
</svg>
<div class="abs" id="d2" style="-webkit-text-stroke:.3px currentColor;left:1295px;top:398px;font-size:19px;font-weight:700;letter-spacing:.04px;transform-origin:0 50%;transform:scaleX(1.03)">Choose a file</div>
<div class="abs" id="d3" style="-webkit-text-stroke:.25px currentColor;left:1137px;top:494px;font-size:16.5px;letter-spacing:.13px;color:#a3b6c1;transform-origin:0 50%;transform:scaleX(1.05)">Supported file formats: JPG, PNG, GIF, WebP, BMP</div>
<div class="abs" id="d4" style="-webkit-text-stroke:.25px currentColor;left:1137px;top:520.5px;font-size:16.5px;letter-spacing:.4px;color:#a3b6c1;transform-origin:0 50%;transform:scaleX(1.05)">Maximum file size: 50 MB</div>

<!-- examples -->
<div class="abs" id="e0" style="-webkit-text-stroke:.4px currentColor;left:1248px;top:734px;font-size:18px;letter-spacing:.63px;transform-origin:0 50%;transform:scaleX(1.08)">Try with an example</div>
<div class="ex" style="left:1184px"><svg width="97" height="97" viewBox="0 0 97 97" style="display:block"><defs><linearGradient id="e1bg" x1="0" y1="0" x2="1" y2="0"><stop offset="0" stop-color="#cdbb95"/><stop offset=".5" stop-color="#d9c9a4"/><stop offset="1" stop-color="#e2d0a2"/></linearGradient><linearGradient id="e1h" x1="0" y1="0" x2="1" y2="1"><stop offset="0" stop-color="#6f4e33"/><stop offset=".55" stop-color="#8f6a43"/><stop offset="1" stop-color="#c09d63"/></linearGradient><radialGradient id="e1f" cx="55%" cy="45%" r="60%"><stop offset="0" stop-color="#f0c9b1"/><stop offset="1" stop-color="#d5a385"/></radialGradient></defs><rect width="97" height="97" fill="url(#e1bg)"/><path d="M0 0 L30 0 L10 18 L0 40Z" fill="#c9762c"/><path d="M0 10 L12 6 L8 24 L0 34Z" fill="#8a9a5c"/><path d="M70 0 L97 0 L97 22 Q88 6 70 0Z" fill="#cf8a3c"/><rect x="0" y="70" width="8" height="14" fill="#b8622a"/><path d="M4 32 Q6 14 24 3 Q48 -3 72 1 Q90 6 97 20 L97 57 Q92 60 84 56 L70 30 L30 30 L14 56 Q8 60 5 50Z" fill="#15110f"/><path d="M52 8 Q36 12 30 30 Q22 44 14 56 Q6 72 12 97 L97 97 L97 66 Q92 50 88 40 Q84 22 74 14 Q64 7 52 8Z" fill="url(#e1h)"/><path d="M50 9 Q40 24 40 44 Q34 56 36 70 Q30 52 32 34 Q36 16 50 9Z" fill="#6b4a30" opacity=".8"/><path d="M76 44 Q82 58 74 72 Q70 84 76 97 L62 97 Q62 80 68 70 Q76 58 76 44Z" fill="#6d4b31" opacity=".75"/><path d="M14 60 Q22 74 20 97 L30 97 Q32 78 24 60Z" fill="#b08a58" opacity=".7"/><path d="M84 62 Q92 74 88 97 L97 97 L97 70Z" fill="#d8bb80" opacity=".8"/><path d="M40 60 L34 97 L56 97 L62 70Z" fill="#d8a88a"/><path d="M52 78 Q58 84 64 97 L48 97 Q50 88 52 78Z" fill="#6a1c2c"/><path d="M6 82 Q12 86 14 97 L4 97Z" fill="#6a1c2c"/><path d="M46 20 Q60 12 74 22 Q82 32 78 46 Q76 60 66 68 Q56 76 48 68 Q38 58 38 42 Q38 28 46 20Z" fill="url(#e1f)"/><path d="M52 9 Q40 20 39 40 Q38 52 42 60 Q34 46 36 30 Q40 14 52 9Z" fill="#8a6542"/><path d="M56 9 Q72 12 80 26 Q86 40 84 54 Q82 38 76 28 Q68 16 56 12Z" fill="#8f6a45"/><path d="M50 27 Q55 25 60 28" stroke="#6a4a32" stroke-width="1.4" fill="none"/><path d="M68 34 Q73 33 77 37" stroke="#6a4a32" stroke-width="1.4" fill="none"/><ellipse cx="53.5" cy="32" rx="3.4" ry="1.8" fill="#5d6a63"/><ellipse cx="71.5" cy="40" rx="3.2" ry="1.8" fill="#5d6a63"/><path d="M62 40 Q60 46 62 49 Q65 51 68 49" stroke="#c08c72" stroke-width="1.5" fill="none"/><path d="M52 54 Q58 53 66 59 Q58 62 52 54Z" fill="#cc8b7e"/></svg></div>
<div class="ex" style="left:1292px"><svg width="97" height="97" viewBox="0 0 97 97" style="display:block"><defs><linearGradient id="e2bg" x1="0" y1="0" x2="1" y2="0"><stop offset="0" stop-color="#e6e3dc"/><stop offset=".2" stop-color="#f3f1ec"/><stop offset=".28" stop-color="#dcd8cf"/><stop offset=".36" stop-color="#f1efea"/><stop offset=".7" stop-color="#f4f2ee"/><stop offset=".86" stop-color="#e4e1d9"/><stop offset="1" stop-color="#efede8"/></linearGradient></defs><rect width="97" height="97" fill="url(#e2bg)"/><path d="M47 5 Q36 6 34 22 Q33 36 38 46 L48 50 L62 50 Q70 58 75 64 Q70 44 64 26 Q58 6 47 5Z" fill="#d8c6a4"/><path d="M55 10 Q62 28 64 48 Q68 56 74 62 Q70 42 64 26 Q60 12 55 10Z" fill="#c7b38f"/><path d="M44 38 L46 50 L58 48 L54 36Z" fill="#e2bba4"/><path d="M48 49 Q56 44 62 48 Q72 56 76 76 L78 97 L44 97 Q48 80 46 64Z" fill="#f5f3f0"/><path d="M62 50 Q74 62 77 97 L70 97 Q70 70 60 54Z" fill="#e4e1db"/><path d="M54 53 Q64 50 72 62 L74 70 Q68 56 56 56Z" fill="#c98b2b"/><path d="M42 89 L50 89 L50 97 L42 97Z" fill="#d8891c"/><path d="M36 22 Q37 12 46 12 Q55 13 56 26 Q56 38 48 43 Q40 44 37 34Z" fill="#efcdb8"/><path d="M37 26 Q40 25 43 26.5 M48 26 Q51 24.5 54 26" stroke="#7a6250" stroke-width="1.3" fill="none"/><path d="M41 36 Q45 35 48 36.5 Q45 39 41 36Z" fill="#d08d84"/><path d="M29 50 L33 62 L38 92 L35 92 L31 66Z" fill="#5f9446"/><path d="M44 60 L40 97 L36 97 L41 62Z" fill="#4c8a3a"/><path d="M50 66 L42 97 L38 97 L47 66Z" fill="#3f7d36"/><path d="M37 62 L39 90 L36 94 L34 70Z" fill="#6aa04e"/><circle cx="42.3" cy="53.6" r="5.6" fill="#f2cf1f"/><circle cx="43.1" cy="54.4" r="2.5" fill="#e0b012"/><circle cx="48.4" cy="59.8" r="4.8" fill="#f2cf1f"/><circle cx="49.2" cy="60.6" r="2.2" fill="#e0b012"/><circle cx="55.6" cy="66.4" r="5.6" fill="#f2cf1f"/><circle cx="56.4" cy="67.2" r="2.5" fill="#e0b012"/><circle cx="47.8" cy="75.6" r="5.4" fill="#f2cf1f"/><circle cx="48.6" cy="76.4" r="2.4" fill="#e0b012"/><path d="M28 92 Q32 90 36 93 L37 97 L28 97Z" fill="#e7c2ac"/></svg></div>
<div class="ex" style="left:1400px"><svg width="97" height="97" viewBox="0 0 97 97" style="display:block"><defs><linearGradient id="e3bg" x1="0" y1="0" x2="1" y2="0"><stop offset="0" stop-color="#5e5e5c"/><stop offset=".4" stop-color="#8d8a83"/><stop offset="1" stop-color="#9c9990"/></linearGradient><linearGradient id="e3s" x1="0" y1="0" x2="1" y2="0"><stop offset="0" stop-color="#2a4269"/><stop offset=".5" stop-color="#22365a"/><stop offset="1" stop-color="#283f65"/></linearGradient></defs><rect width="97" height="97" fill="#8d8b84"/><rect x="0" y="0" width="53" height="37" fill="url(#e3bg)"/><rect x="16" y="0" width=".7" height="36" fill="#77756f"/><rect x="36" y="0" width=".7" height="36" fill="#85827b"/><rect x="0" y="38" width="22" height="30" fill="#80868a"/><rect x="14" y="35.5" width="30" height="2.6" fill="#2b2b2a"/><rect x="16" y="20" width="18" height="4" fill="#b9b6ae" opacity=".7"/><rect x="53" y="4" width="24" height="48" fill="#eef1f1"/><rect x="53" y="0" width="24" height="5" fill="#bdbbb4"/><rect x="53" y="29.5" width="24" height="2" fill="#2c2c2c"/><rect x="53" y="38" width="24" height="1.2" fill="#6b6f70"/><rect x="77" y="0" width="6.4" height="70" fill="#7b8486"/><rect x="83.4" y="0" width="14" height="97" fill="#8e8b81"/><ellipse cx="90" cy="39" rx="7" ry="14" fill="#46603f"/><rect x="83.4" y="54" width="14" height="20" fill="#5a6264"/><ellipse cx="89" cy="78" rx="9" ry="8.5" fill="#3b5a3c"/><rect x="0" y="66" width="22" height="31" fill="#23272b"/><rect x="7" y="63" width="10" height="10" fill="#15181b"/><rect x="0" y="67" width="5" height="4" fill="#d8dadb"/><path d="M3 80 L5 80 L7 90 L5 90Z" fill="#cfd2d3"/><rect x="0" y="88" width="97" height="9" fill="#1b2025"/><path d="M70 88 L86 88 L85 97 L72 97Z" fill="#c9ced1"/><path d="M36 39 L22 46 Q17 56 17.5 66 Q17 78 22 97 L71 97 Q79 84 79 70 Q78 56 74 49 L60 41 L56 38Z" fill="url(#e3s)"/><path d="M22 78 Q40 88 58 84 Q72 80 79 72 L79 80 Q66 92 44 92 Q30 92 20 86Z" fill="#1b2e4e"/><path d="M41 37 L56 40 L51 66 L48 60Z" fill="#eef2f6"/><path d="M41 37 L49 62 L45 66 L37 42Z" fill="#203659"/><path d="M56 40 L51 66 L54 68 L60 43Z" fill="#223a5f"/><rect x="44" y="74" width="5" height="10" fill="#eef1f4"/><rect x="49" y="91" width="5" height="6" fill="#e6eaee"/><path d="M22 66 Q28 60 36 63 Q42 68 44 76 Q38 78 32 74 Q26 72 22 66Z" fill="#d3a587"/><path d="M60 68 Q66 63 75 66 Q76 71 70 73 Q64 74 60 68Z" fill="#d0a183"/><path d="M42 26 Q40 12 50 10 Q60 10 60 24 Q60 34 55 38 Q50 41 46 37 Q42 33 42 26Z" fill="#cc9c80"/><path d="M40.5 22 Q40 9 50 8 Q61 8 60.5 21 Q57 14 50 14.5 Q43 15 40.5 22Z" fill="#4b4541"/><path d="M44.5 32 Q50 35 56.5 31 Q56 38 51 39.5 Q46 39 44.5 32Z" fill="#a59d97"/><path d="M46.5 31.5 Q50 33.5 54.5 31" stroke="#f3ece6" stroke-width="1" fill="none"/><path d="M44 22.5 L48 22.5 M52 22.5 L57 22.5" stroke="#5a4a40" stroke-width="1"/></svg></div>
</body>
</html>
